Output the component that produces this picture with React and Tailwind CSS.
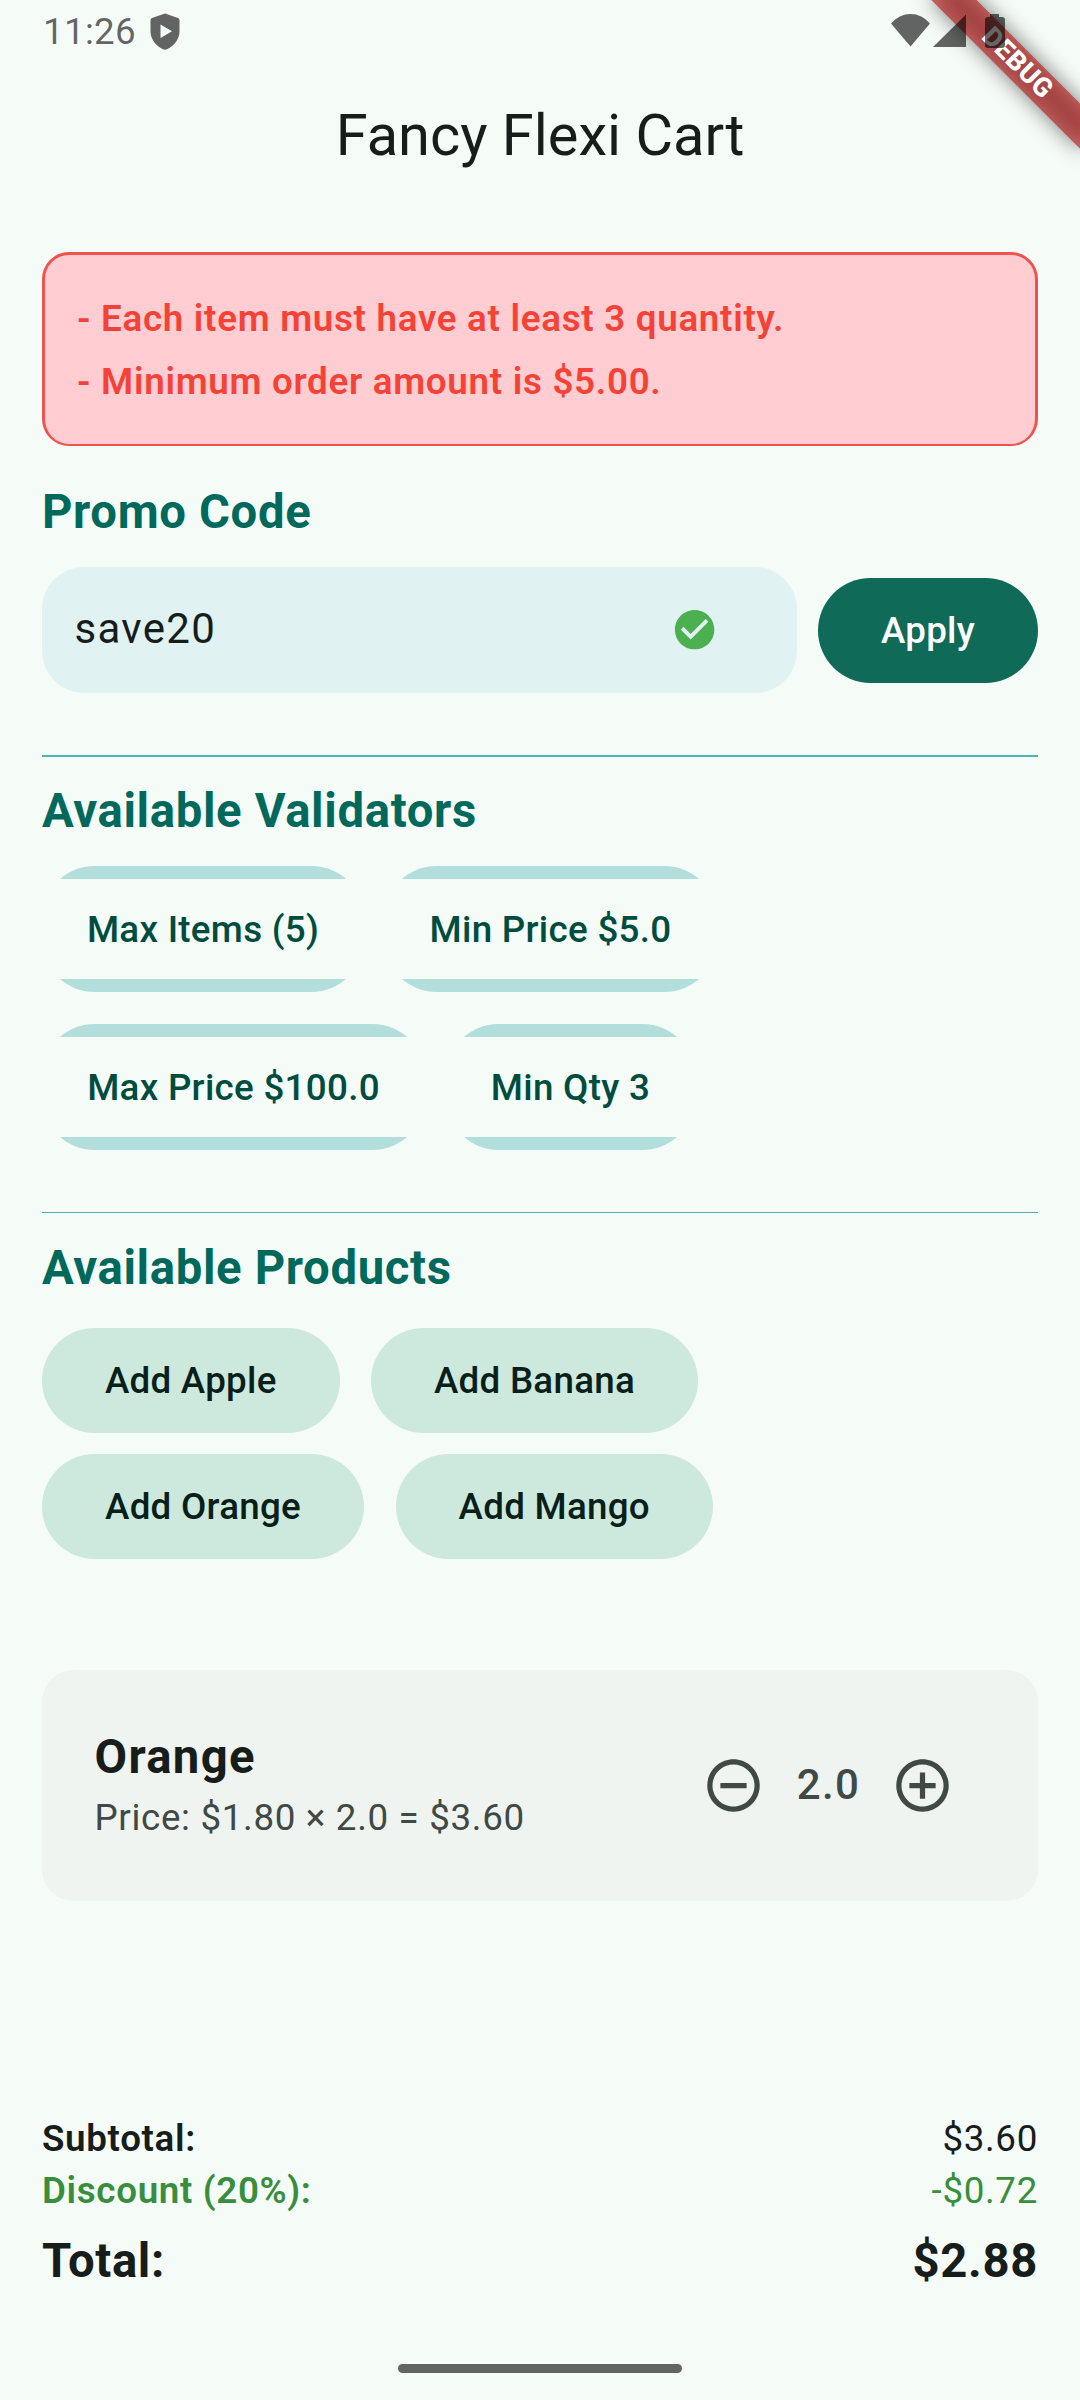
import React from "react";

const Heading = ({ children, className }) => (
  <h2 className={`flex h-[66px] items-center pt-[2px] text-[47.25px] leading-none font-bold tracking-[0.66px] text-[#00695C] ${className}`}>
    {children}
  </h2>
);

const Chip = ({ children, className }) => (
  <div className={`flex h-[126px] items-center justify-center rounded-[52.5px] bg-[linear-gradient(#B2DFDB_13px,transparent_13px,transparent_113px,#B2DFDB_113px)] pt-[2px] text-[36.75px] leading-none font-medium tracking-[0.29px] whitespace-nowrap text-[#004D40] ${className}`}>
    {children}
  </div>
);

const ProductButton = ({ children, className }) => (
  <button className={`flex h-[105px] items-center justify-center rounded-full bg-[#CDE9DD] pt-[2px] text-[36.75px] leading-none font-medium tracking-[0.26px] whitespace-nowrap text-[#082019] ${className}`}>
    {children}
  </button>
);

const Icon = ({ d, className }) => (
  <svg viewBox="0 0 24 24" fill="currentColor" className={className}>
    <path d={d} />
  </svg>
);

const CHECK = "M12 2C6.48 2 2 6.48 2 12s4.48 10 10 10 10-4.48 10-10S17.52 2 12 2zm-2 15l-5-5 1.41-1.41L10 14.17l7.59-7.59L19 8l-9 9z";
const MINUS = "M7 11v2h10v-2H7zm5-9C6.48 2 2 6.48 2 12s4.48 10 10 10 10-4.48 10-10S17.52 2 12 2zm0 18c-4.41 0-8-3.59-8-8s3.59-8 8-8 8 3.59 8 8-3.59 8-8 8z";
const PLUS = "M13 7h-2v4H7v2h4v4h2v-4h4v-2h-4V7zm-1-5C6.48 2 2 6.48 2 12s4.48 10 10 10 10-4.48 10-10S17.52 2 12 2zm0 18c-4.41 0-8-3.59-8-8s3.59-8 8-8 8 3.59 8 8-3.59 8-8 8z";

const StatusBar = () => (
  <div className="relative z-20 flex h-[64px] items-start justify-between pr-[75px] pl-[43px] text-black/60">
    <div className="flex items-start">
      <span className="mt-[11px] w-[107px] text-[36.75px] leading-[42px] tracking-[0.3px]">11:26</span>
      <svg viewBox="0 0 30 37" fill="currentColor" className="mt-[13px] h-[37px] w-[30px]">
        <path fillRule="evenodd" d="M15 .5 28 5q1.500.6 1.500 2.200V18c0 8-5 14.500-12.500 18.200q-2 .9-4 0C5.500 32.500.5 26 .5 18V7.200Q.5 5.600 2 5ZM10.500 11.500v13.500L22 18.200Z" />
      </svg>
    </div>
    <svg viewBox="0 0 114 36" fill="currentColor" className="mt-[13px] h-[36px] w-[114px]">
      <path d="M0 10.500Q8 1 19.500 1T39 10.500L19.500 33.500Z" />
      <path d="M42 34 75 1.500V34Z" />
      <path d="M94 7q0-3 3-3h2V1h9v3h3q3 0 3 3v25q0 3-3 3H97q-3 0-3-3Z" />
    </svg>
  </div>
);

const DebugRibbon = () => (
  <div className="absolute top-[47.05px] left-[912.2px] z-10 h-[31.5px] w-[210px] rotate-45">
    <div className="absolute inset-0 bg-black/50 blur-[10.4px]" />
    <div className="relative flex h-full items-center justify-center bg-[#B71C1C]/63 pl-[1px] text-[26.8px] leading-none font-extrabold tracking-[0.4px] text-white">
      DEBUG
    </div>
  </div>
);

export default function App() {
  return (
    <div className="relative h-[2400px] w-[1080px] overflow-hidden bg-[#F5FBF7] font-['Roboto',sans-serif] text-[#171D1A]">
      <StatusBar />
      <DebugRibbon />
      <h1 className="flex h-[142px] items-center justify-center pt-[2px] text-[57.75px] leading-none">Fancy Flexi Cart</h1>

      <main className="mt-[46px] px-[42px]">
        <div className="h-[194px] rounded-[27px] border-[3px] border-b-[2px] border-[#EF5350] bg-[#FFCDD2] px-[32px] pt-[31.5px] text-[36.75px] leading-[63px] font-semibold tracking-[0.71px] text-[#F44336]">
          <p>- Each item must have at least 3 quantity.</p>
          <p>- Minimum order amount is $5.00.</p>
        </div>

        <Heading className="mt-[33px]">Promo Code</Heading>
        <div className="mt-[22px] flex items-center justify-between">
          <div className="flex h-[126px] w-[755px] items-center justify-between rounded-[42px] bg-[#E0F2F1] pr-[79px] pl-[32.5px]">
            <span className="mb-[3px] text-[42px] leading-none tracking-[1.31px]">save20</span>
            <Icon d={CHECK} className="h-[47.25px] w-[47.25px] text-[#4CAF50]" />
          </div>
          <button className="h-[105px] w-[220px] rounded-full bg-[#0F6B58] pt-[2px] text-[36.75px] leading-none font-medium tracking-[0.26px] text-white">
            Apply
          </button>
        </div>

        <div className="mt-[62px] h-[2px] bg-[#4DB6AC]" />
        <Heading className="mt-[21px]">Available Validators</Heading>
        <div className="mt-[22px] flex flex-col gap-[32px]">
          <div className="flex gap-[20px]">
            <Chip className="w-[322px]">Max Items (5)</Chip>
            <Chip className="w-[333px]">Min Price $5.0</Chip>
          </div>
          <div className="flex gap-[21px]">
            <Chip className="w-[383px]">Max Price $100.0</Chip>
            <Chip className="w-[249px]">Min Qty 3</Chip>
          </div>
        </div>

        <div className="mt-[62px] h-px bg-[#4DB6AC]" />
        <Heading className="mt-[22px]">Available Products</Heading>
        <div className="mt-[27px] flex flex-col gap-[21px]">
          <div className="flex gap-[31.5px]">
            <ProductButton className="w-[297.5px]">Add Apple</ProductButton>
            <ProductButton className="w-[327px]">Add Banana</ProductButton>
          </div>
          <div className="flex gap-[31.5px]">
            <ProductButton className="w-[322px]">Add Orange</ProductButton>
            <ProductButton className="w-[317.5px]">Add Mango</ProductButton>
          </div>
        </div>

        <div className="mt-[111px] flex h-[231px] items-center justify-between rounded-[31.5px] bg-[#EFF4F1] pr-[84px] pl-[52.5px]">
          <div>
            <p className="-mt-px mb-px text-[47.25px] leading-[64px] font-bold tracking-[1.31px]">Orange</p>
            <p className="text-[36.75px] leading-[56px] tracking-[0.66px] text-[#404945]">Price: $1.80 × 2.0 = $3.60</p>
          </div>
          <div className="flex items-center text-[#404945]">
            <Icon d={MINUS} className="h-[63px] w-[63px]" />
            <span className="mb-[1px] w-[126px] pl-[1px] text-center text-[42px] leading-none font-medium tracking-[1.31px]">2.0</span>
            <Icon d={PLUS} className="h-[63px] w-[63px]" />
          </div>
        </div>

        <div className="mt-[212px] text-[36.75px] leading-[52px] tracking-[0.66px]">
          <div className="flex justify-between">
            <span className="font-semibold">Subtotal:</span>
            <span>$3.60</span>
          </div>
          <div className="flex justify-between text-[#388E3C]">
            <span className="font-semibold">Discount (20%):</span>
            <span>-$0.72</span>
          </div>
          <div className="mt-[11px] flex justify-between text-[47.25px] leading-[66px] font-bold">
            <span>Total:</span>
            <span>$2.88</span>
          </div>
        </div>
        <div className="mx-auto mt-[70px] h-[9px] w-[284px] rounded-full bg-black/60" />
      </main>
    </div>
  );
}
